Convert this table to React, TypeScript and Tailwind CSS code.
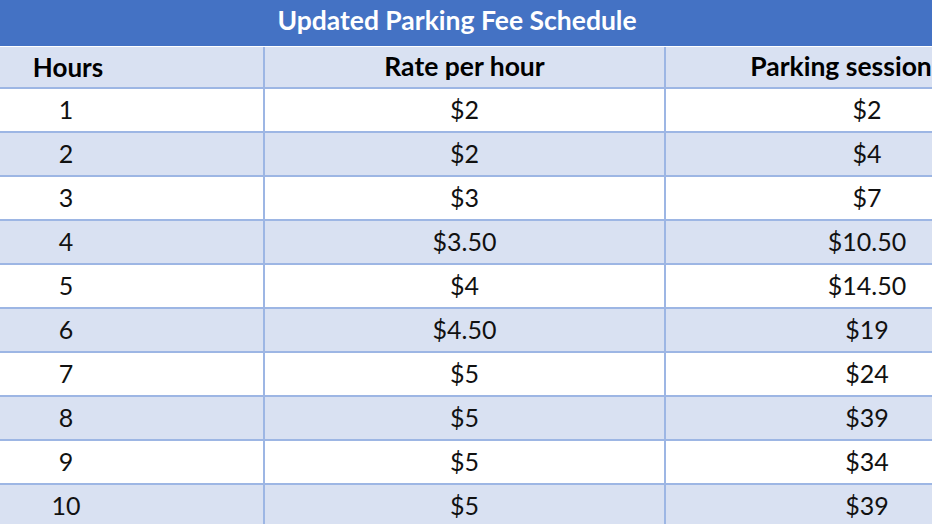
const rows = [
  { hours: '1', rate: '$2', session: '$2' },
  { hours: '2', rate: '$2', session: '$4' },
  { hours: '3', rate: '$3', session: '$7' },
  { hours: '4', rate: '$3.50', session: '$10.50' },
  { hours: '5', rate: '$4', session: '$14.50' },
  { hours: '6', rate: '$4.50', session: '$19' },
  { hours: '7', rate: '$5', session: '$24' },
  { hours: '8', rate: '$5', session: '$39' },
  { hours: '9', rate: '$5', session: '$34' },
  { hours: '10', rate: '$5', session: '$39' },
];

export default function App() {
  return (
    <div
      className="w-[932px] h-[524px] overflow-hidden bg-white text-black"
      style={{ fontFamily: 'Lato, "Open Sans", sans-serif' }}
    >
      {/* Title bar */}
      <div className="h-[46px] bg-[#4472c4] flex items-center justify-center pr-[18px] pb-[4px] mb-px">
        <span className="text-white font-bold text-[26.5px]">Updated Parking Fee Schedule</span>
      </div>

      <div className="w-[1203px] ml-[-135px]">
        {/* Header row */}
        <div className="grid grid-cols-[400px_401px_402px] h-[42px] bg-[#d9e1f2] border-b-2 border-[#9db6e4] font-bold text-[26.5px]">
          <div className="flex items-center justify-center border-r-2 border-[#9db6e4] pl-[8px] text-[26px]">Hours</div>
          <div className="flex items-center justify-center border-r-2 border-[#9db6e4]">Rate per hour</div>
          <div className="flex items-center justify-center pr-[52px]">Parking session</div>
        </div>

        {/* Data rows */}
        {rows.map((r, i) => (
          <div
            key={r.hours}
            className={`grid grid-cols-[400px_401px_402px] h-[44px] border-b-2 border-[#9db6e4] text-[25px] text-[#111] ${
              i % 2 === 0 ? 'bg-white' : 'bg-[#d9e1f2]'
            }`}
          >
            <div className="flex items-center justify-center border-r-2 border-[#9db6e4] pl-[4px]">{r.hours}</div>
            <div className="flex items-center justify-center border-r-2 border-[#9db6e4]">{r.rate}</div>
            <div className="flex items-center justify-center">{r.session}</div>
          </div>
        ))}
      </div>
    </div>
  );
}
